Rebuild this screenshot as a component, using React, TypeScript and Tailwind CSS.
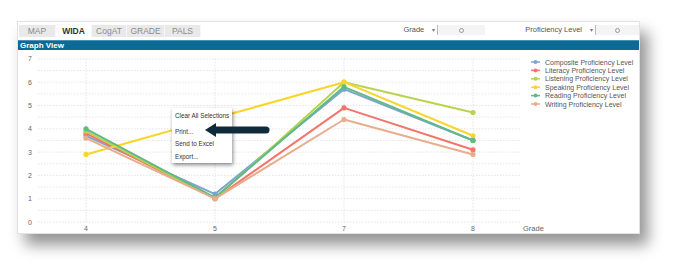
import React from "react";

type Series = { name: string; color: string; values: number[] };

const grades = [4, 5, 7, 8];
const gx = [85, 214, 343, 472];
const gy = (v: number) => 222 - v * 23.3;

const series: Series[] = [
  { name: "Composite Proficiency Level", color: "#7fa3d1", values: [3.7, 1.2, 5.7, 3.5] },
  { name: "Literacy Proficiency Level", color: "#f4746a", values: [3.8, 1.0, 4.9, 3.1] },
  { name: "Listening Proficiency Level", color: "#b6d44c", values: [3.9, 1.0, 6.0, 4.7] },
  { name: "Speaking Proficiency Level", color: "#f9d52a", values: [2.9, 4.45, 6.0, 3.7] },
  { name: "Reading Proficiency Level", color: "#5fba86", values: [4.0, 1.05, 5.8, 3.5] },
  { name: "Writing Proficiency Level", color: "#e9ad8c", values: [3.6, 1.0, 4.4, 2.9] },
];

const tabs = ["MAP", "WIDA", "CogAT", "GRADE", "PALS"];
const tabWidths = [37, 36, 35, 38, 36];

function Filter({ label, boxW }: { label: string; boxW: number }) {
  return (
    <div className="flex items-center h-[12px]">
      <span className="text-[7.5px] text-[#555]">{label}</span>
      <span className="ml-[8px] text-[6px] text-[#777]">▾</span>
      <div
        className="ml-[2px] h-[10px] border-l border-[#bbb] bg-[#f4f4f4] flex items-center justify-center"
        style={{ width: boxW }}
      >
        <div className="w-[5px] h-[5px] rounded-full border border-[#999]" />
      </div>
    </div>
  );
}

function Chart() {
  const hLines: number[] = [];
  for (let v = 0; v <= 7; v += 0.5) hLines.push(v);
  return (
    <svg width={623} height={183} className="block">
      <g transform="translate(-17,-50)">
        {hLines.map((v) => (
          <line
            key={v}
            x1={37}
            x2={520}
            y1={gy(v)}
            y2={gy(v)}
            stroke="#dedede"
            strokeWidth={0.8}
            strokeDasharray="1.5 1.5"
          />
        ))}
        {gx.map((x) => (
          <line
            key={x}
            x1={x}
            x2={x}
            y1={gy(7)}
            y2={gy(0)}
            stroke="#dedede"
            strokeWidth={0.8}
            strokeDasharray="1.5 1.5"
          />
        ))}
        {[0, 1, 2, 3, 4, 5, 6, 7].map((v) => (
          <text
            key={v}
            x={29}
            y={gy(v) + 2.5}
            fontSize={7}
            fill="#666"
            textAnchor="middle"
            fontFamily="'Liberation Sans', Arial, sans-serif"
          >
            {v}
          </text>
        ))}
        {grades.map((g, i) => (
          <text
            key={g}
            x={gx[i]}
            y={231}
            fontSize={7}
            fill="#666"
            textAnchor="middle"
            fontFamily="'Liberation Sans', Arial, sans-serif"
          >
            {g}
          </text>
        ))}
        <text x={522} y={231} fontSize={7.5} fill="#666" fontFamily="'Liberation Sans', Arial, sans-serif">
          Grade
        </text>
        {series.map((s) => (
          <g key={s.name}>
            <polyline
              points={s.values.map((v, i) => `${gx[i]},${gy(v)}`).join(" ")}
              fill="none"
              stroke={s.color}
              strokeWidth={2}
              strokeLinejoin="round"
            />
            {s.values.map((v, i) => (
              <circle key={i} cx={gx[i]} cy={gy(v)} r={2.6} fill={s.color} />
            ))}
          </g>
        ))}
        {series.map((s, i) => {
          const y = 62 + i * 8.4;
          return (
            <g key={s.name}>
              <line x1={530} x2={539} y1={y} y2={y} stroke={s.color} strokeWidth={1.5} />
              <circle cx={534.5} cy={y} r={2} fill={s.color} />
              <text
                x={544}
                y={y + 2.5}
                fontSize={7}
                fill="#555"
                fontFamily="'Liberation Sans', Arial, sans-serif"
              >
                {s.name}
              </text>
            </g>
          );
        })}
      </g>
    </svg>
  );
}

export default function App() {
  return (
    <div
      className="w-[675px] h-[278px] bg-white pt-[21px] pl-[17px] relative overflow-hidden"
      style={{ fontFamily: "'Liberation Sans', Arial, sans-serif" }}
    >
      <div className="w-[623px] h-[213px] bg-white border border-[#e2e2e2] shadow-[8px_11px_14px_rgba(0,0,0,0.42)] flex flex-col">
        {/* Tabs and filters */}
        <div className="h-[18px] flex items-start justify-between">
          <div className="flex mt-[3px] ml-[1px] bg-[#e9e9e9] h-[12px]">
            {tabs.map((t, i) => (
              <div
                key={t}
                className={`h-[12px] flex items-center justify-center text-[8.5px] border-r border-[#f7f7f7] ${
                  t === "WIDA" ? "bg-white text-[#333] font-bold" : "text-[#8a8a8a]"
                }`}
                style={{ width: tabWidths[i] }}
              >
                {t}
              </div>
            ))}
          </div>
          <div className="flex items-center mt-[2px]">
            <Filter label="Grade" boxW={48} />
            <div className="ml-[40px]">
              <Filter label="Proficiency Level" boxW={44} />
            </div>
          </div>
        </div>
        {/* Graph View bar */}
        <div className="h-[10px] bg-[#0b6b96] flex items-center pl-[2px] border-t border-[#4d8fb0]">
          <span className="text-white text-[8px] font-bold leading-none">Graph View</span>
        </div>
        <Chart />
      </div>

      {/* Context menu */}
      <div className="absolute left-[172px] top-[108px] w-[60px] h-[55px] bg-white shadow-[1px_2px_4px_rgba(0,0,0,0.45)] flex flex-col pl-[3px] pt-[4px] text-[6.3px] text-[#333] leading-[8px] whitespace-nowrap">
        <span>Clear All Selections</span>
        <span className="mt-[8px]">Print...</span>
        <span className="mt-[4px]">Send to Excel</span>
        <span className="mt-[5px]">Export...</span>
      </div>

      {/* Arrow */}
      <svg className="absolute left-[204px] top-[122px]" width={66} height={16}>
        <polygon points="1,8 12,1 12,15" fill="#0f2b3c" />
        <line x1={11} x2={62} y1={8} y2={8} stroke="#0f2b3c" strokeWidth={7} strokeLinecap="round" />
      </svg>
    </div>
  );
}
